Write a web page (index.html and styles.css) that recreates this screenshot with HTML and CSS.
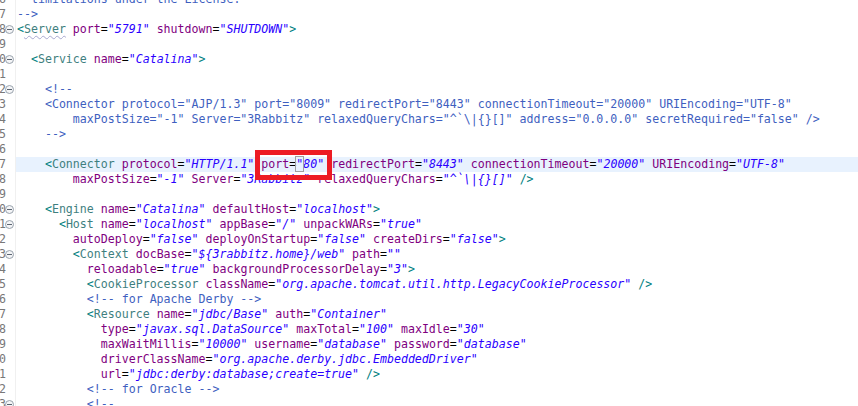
FILE: index.html
```html
<!DOCTYPE html>
<html lang="en">
<head>
    <meta charset="UTF-8">
    <title>server.xml</title>
    <link rel="stylesheet" href="styles.css">
</head>
<body>
    <!-- Editor -->
    <div class="editor">
        <div class="ln"><span class="gut"><span class="num">6</span></span><span class="code"><span class="c">  limitations under the License.</span></span></div>
        <div class="ln"><span class="gut"><span class="num">7</span></span><span class="code"><span class="c">--&gt;</span></span></div>
        <div class="ln"><span class="gut"><span class="num">8</span><span class="fold"></span></span><span class="code"><span class="b">&lt;</span><span class="t sq">Server</span> <span class="a">port</span>=<span class="v">"5791"</span> <span class="a">shutdown</span>=<span class="v">"SHUTDOWN"</span><span class="b">&gt;</span></span></div>
        <div class="ln"><span class="gut"><span class="num">9</span></span><span class="code"></span></div>
        <div class="ln"><span class="gut"><span class="num">10</span><span class="fold"></span></span><span class="code">  <span class="b">&lt;</span><span class="t">Service</span> <span class="a">name</span>=<span class="v">"Catalina"</span><span class="b">&gt;</span></span></div>
        <div class="ln"><span class="gut"><span class="num">11</span></span><span class="code"></span></div>
        <div class="ln"><span class="gut"><span class="num">12</span><span class="fold"></span></span><span class="code"><span class="c">    &lt;!--</span></span></div>
        <div class="ln"><span class="gut"><span class="num">13</span></span><span class="code"><span class="c">    &lt;Connector protocol="AJP/1.3" port="8009" redirectPort="8443" connectionTimeout="20000" URIEncoding="UTF-8"</span></span></div>
        <div class="ln"><span class="gut"><span class="num">14</span></span><span class="code"><span class="c">        maxPostSize="-1" Server="3Rabbitz" relaxedQueryChars="^`\|{}[]" address="0.0.0.0" secretRequired="false" /&gt;</span></span></div>
        <div class="ln"><span class="gut"><span class="num">15</span></span><span class="code"><span class="c">    --&gt;</span></span></div>
        <div class="ln"><span class="gut"><span class="num">16</span></span><span class="code"></span></div>
        <div class="ln cur"><span class="gut"><span class="num">17</span></span><span class="code">    <span class="b">&lt;</span><span class="t">Connector</span> <span class="a">protocol</span>=<span class="v">"HTTP/1.1"</span> <span class="a">port</span>=<span class="v"><span class="match">"</span>80"</span> <span class="a">redirectPort</span>=<span class="v">"8443"</span> <span class="a">connectionTimeout</span>=<span class="v">"20000"</span> <span class="a">URIEncoding</span>=<span class="v">"UTF-8"</span></span></div>
        <div class="ln"><span class="gut"><span class="num">18</span></span><span class="code">        <span class="a">maxPostSize</span>=<span class="v">"-1"</span> <span class="a">Server</span>=<span class="v">"3Rabbitz"</span> <span class="a">relaxedQueryChars</span>=<span class="v">"^`\|{}[]"</span> <span class="b">/&gt;</span></span></div>
        <div class="ln"><span class="gut"><span class="num">19</span></span><span class="code"></span></div>
        <div class="ln"><span class="gut"><span class="num">20</span><span class="fold"></span></span><span class="code">    <span class="b">&lt;</span><span class="t">Engine</span> <span class="a">name</span>=<span class="v">"Catalina"</span> <span class="a">defaultHost</span>=<span class="v">"localhost"</span><span class="b">&gt;</span></span></div>
        <div class="ln"><span class="gut"><span class="num">21</span><span class="fold"></span></span><span class="code">      <span class="b">&lt;</span><span class="t">Host</span> <span class="a">name</span>=<span class="v">"localhost"</span> <span class="a">appBase</span>=<span class="v">"/"</span> <span class="a">unpackWARs</span>=<span class="v">"true"</span></span></div>
        <div class="ln"><span class="gut"><span class="num">22</span></span><span class="code">        <span class="a">autoDeploy</span>=<span class="v">"false"</span> <span class="a">deployOnStartup</span>=<span class="v">"false"</span> <span class="a">createDirs</span>=<span class="v">"false"</span><span class="b">&gt;</span></span></div>
        <div class="ln"><span class="gut"><span class="num">23</span><span class="fold"></span></span><span class="code">        <span class="b">&lt;</span><span class="t">Context</span> <span class="a">docBase</span>=<span class="v">"${3rabbitz.home}/web"</span> <span class="a">path</span>=<span class="v">""</span></span></div>
        <div class="ln"><span class="gut"><span class="num">24</span></span><span class="code">          <span class="a">reloadable</span>=<span class="v">"true"</span> <span class="a">backgroundProcessorDelay</span>=<span class="v">"3"</span><span class="b">&gt;</span></span></div>
        <div class="ln"><span class="gut"><span class="num">25</span></span><span class="code">          <span class="b">&lt;</span><span class="t">CookieProcessor</span> <span class="a">className</span>=<span class="v">"org.apache.tomcat.util.http.LegacyCookieProcessor"</span> <span class="b">/&gt;</span></span></div>
        <div class="ln"><span class="gut"><span class="num">26</span></span><span class="code">          <span class="c">&lt;!-- for Apache Derby --&gt;</span></span></div>
        <div class="ln"><span class="gut"><span class="num">27</span></span><span class="code">          <span class="b">&lt;</span><span class="t">Resource</span> <span class="a">name</span>=<span class="v">"jdbc/Base"</span> <span class="a">auth</span>=<span class="v">"Container"</span></span></div>
        <div class="ln"><span class="gut"><span class="num">28</span></span><span class="code">            <span class="a">type</span>=<span class="v">"javax.sql.DataSource"</span> <span class="a">maxTotal</span>=<span class="v">"100"</span> <span class="a">maxIdle</span>=<span class="v">"30"</span></span></div>
        <div class="ln"><span class="gut"><span class="num">29</span></span><span class="code">            <span class="a">maxWaitMillis</span>=<span class="v">"10000"</span> <span class="a">username</span>=<span class="v">"database"</span> <span class="a">password</span>=<span class="v">"database"</span></span></div>
        <div class="ln"><span class="gut"><span class="num">30</span></span><span class="code">            <span class="a">driverClassName</span>=<span class="v">"org.apache.derby.jdbc.EmbeddedDriver"</span></span></div>
        <div class="ln"><span class="gut"><span class="num">31</span></span><span class="code">            <span class="a">url</span>=<span class="v">"jdbc:derby:database;create=true"</span> <span class="b">/&gt;</span></span></div>
        <div class="ln"><span class="gut"><span class="num">32</span></span><span class="code">          <span class="c">&lt;!-- for Oracle --&gt;</span></span></div>
        <div class="ln"><span class="gut"><span class="num">33</span><span class="fold"></span></span><span class="code">          <span class="c">&lt;!--</span></span></div>

        <!-- Red annotation box -->
        <div class="mark"></div>
    </div>
</body>
</html>
```

FILE: styles.css
```css
/* General Styles */
* {
    margin: 0;
    padding: 0;
    box-sizing: border-box;
}

body {
    background: #fff;
    overflow: hidden;
    font-family: "DejaVu Sans Mono", "Liberation Mono", monospace;
    font-size: 11.6px;
    color: #000;
}

/* Editor */
.editor {
    position: relative;
    margin-top: -8px;
}

.ln {
    display: flex;
    height: 15px;
    line-height: 15px;
}

/* Gutter with line numbers and fold markers */
.gut {
    position: relative;
    display: flex;
    flex: 0 0 16px;
    border-right: 1px solid #f0f0f0;
    margin-right: 0;
}

.num {
    display: flex;
    justify-content: flex-end;
    width: 6px;
    overflow: hidden;
    color: #787878;
}

.fold {
    position: absolute;
    left: 5px;
    top: 3px;
    width: 9px;
    height: 9px;
    border: 1px solid #9aa3ad;
    border-radius: 50%;
    background: #f4f5f7;
}

.fold::after {
    content: "";
    position: absolute;
    left: 1px;
    top: 3px;
    width: 5px;
    height: 1px;
    background: #5a6470;
}

.code {
    flex: 1;
    white-space: pre;
    padding-left: 1px;
}

.cur .code {
    background: #e8f2fe;
}

/* Syntax colours */
.b { color: #008080; }
.t { color: #3f7f7f; }
.a { color: #7f007f; }
.v { color: #2a00ff; font-style: italic; }
.c { color: #3f5fbf; }

.sq {
    text-decoration: underline wavy #a8a8d0;
    text-decoration-thickness: 1px;
    text-underline-offset: 2px;
}

.match {
    outline: 1px solid #a0a0a0;
}

/* Annotation */
.mark {
    position: absolute;
    left: 255px;
    top: 158px;
    width: 77px;
    height: 30px;
    border: 5px solid #ed1c24;
}
```
